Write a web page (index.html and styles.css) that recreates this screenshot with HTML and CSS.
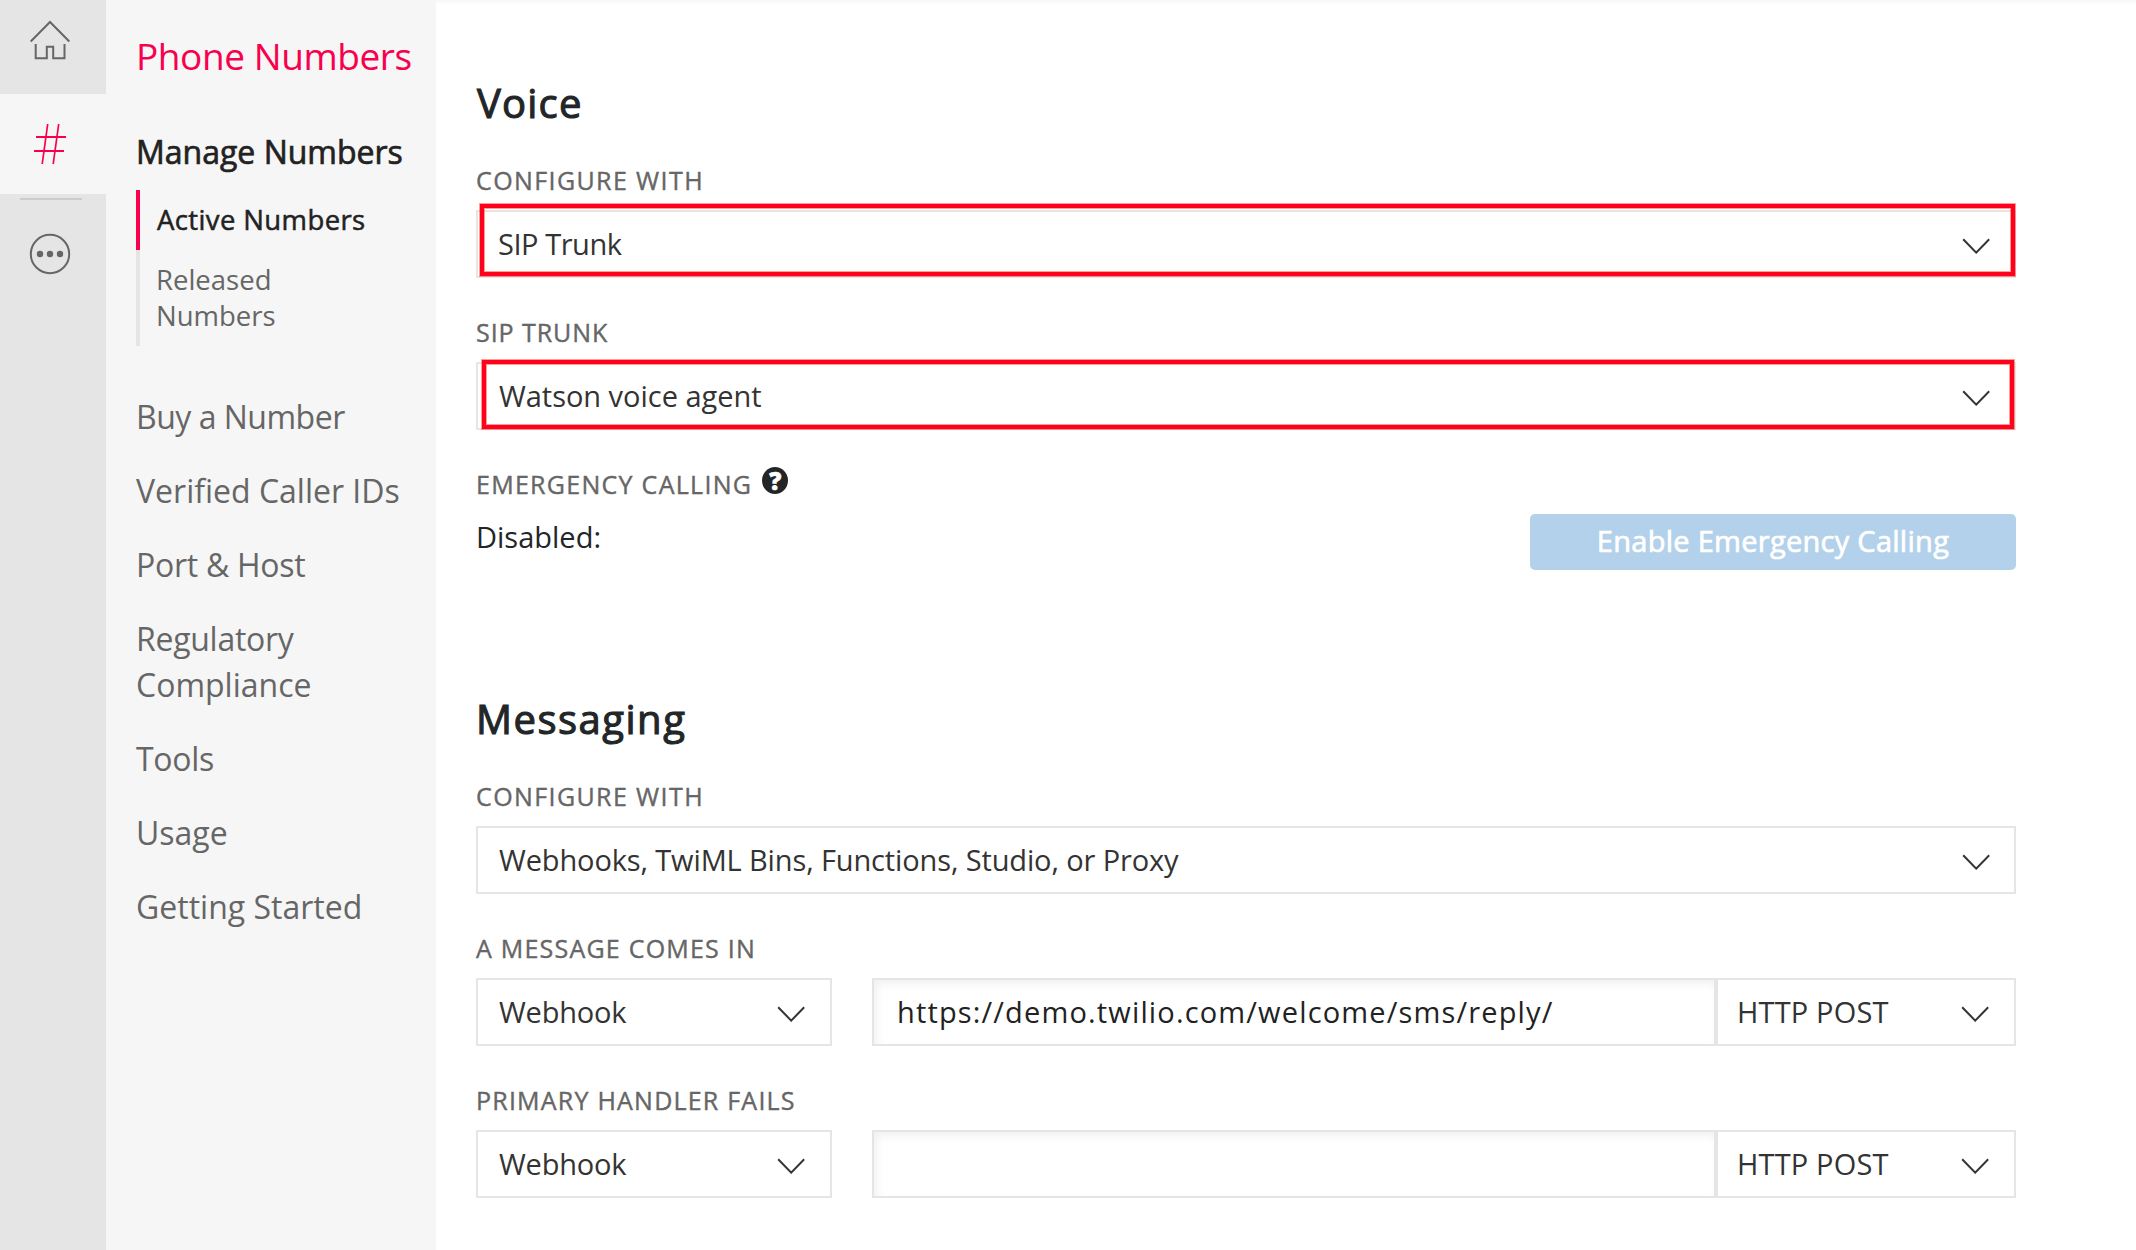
FILE: index.html
```html
<!DOCTYPE html>
<html lang="en">
<head>
<meta charset="utf-8">
<title>Phone Numbers</title>
<link rel="stylesheet" href="styles.css">
</head>
<body>
<svg class="defs" width="0" height="0" aria-hidden="true">
  <symbol id="chevron" viewBox="0 0 28 16"><path d="M1.2 1.3 14.2 14.6 27.2 1.3"/></symbol>
</svg>
<div class="app">
  <div class="rail">
    <a class="rail-item rail-home">
      <svg class="icon" width="44" height="44" viewBox="0 0 44 44"><path d="M2.7 23.5 22 4 41.300 23.500M7.700 26V40.200H18.800V28.800H25.200V40.200H36.500V26"/></svg>
    </a>
    <a class="rail-item rail-active">
      <svg class="icon icon-red" width="44" height="44" viewBox="0 0 44 44"><path d="M8 15H38M6 29H36"/><path class="thin" d="M19.700 2 14.200 42M30.700 2 25.200 42"/></svg>
    </a>
    <div class="rail-divider"></div>
    <a class="rail-item rail-more">
      <svg class="icon" width="44" height="44" viewBox="0 0 44 44"><circle cx="22" cy="22" r="19.200"/><g class="dots"><circle cx="12" cy="22" r="3.200"/><circle cx="22" cy="22" r="3.200"/><circle cx="32" cy="22" r="3.200"/></g></svg>
    </a>
  </div>

  <nav class="nav">
    <h1 class="nav-title">Phone Numbers</h1>
    <a class="nav-item current">Manage Numbers</a>
    <div class="subnav">
      <a class="subnav-item current">Active Numbers</a>
      <a class="subnav-item">Released<br>Numbers</a>
    </div>
    <div class="nav-list">
      <a class="nav-item tight">Buy a Number</a>
      <a class="nav-item">Verified Caller IDs</a>
      <a class="nav-item snug">Port &amp; Host</a>
      <a class="nav-item"><span class="snug">Regulatory</span><br>Compliance</a>
      <a class="nav-item snug">Tools</a>
      <a class="nav-item">Usage</a>
      <a class="nav-item">Getting Started</a>
    </div>
  </nav>

  <main class="main">
    <section class="section">
      <h2 class="heading heading-voice">Voice</h2>
      <div class="field">
        <div class="label label-wide">Configure with</div>
        <div class="select marked marked-config"><span class="sip">SIP Trunk</span><svg class="chevron"><use href="#chevron"/></svg></div>
      </div>
      <div class="field">
        <div class="label label-sip">SIP Trunk</div>
        <div class="select marked marked-trunk"><span>Watson voice agent</span><svg class="chevron"><use href="#chevron"/></svg></div>
      </div>
      <div class="field">
        <div class="label">Emergency Calling<span class="help">?</span></div>
        <div class="status-row">
          <span class="status">Disabled:</span>
          <button class="button">Enable Emergency Calling</button>
        </div>
      </div>
    </section>

    <section class="section section-messaging">
      <h2 class="heading">Messaging</h2>
      <div class="field">
        <div class="label label-wide">Configure with</div>
        <div class="select"><span class="products">Webhooks, TwiML Bins, Functions, Studio, or Proxy</span><svg class="chevron"><use href="#chevron"/></svg></div>
      </div>
      <div class="field">
        <div class="label label-message">A message comes in</div>
        <div class="row">
          <div class="select select-type"><span class="type">Webhook</span><svg class="chevron"><use href="#chevron"/></svg></div>
          <div class="input">https://demo.twilio.com/welcome/sms/reply/</div>
          <div class="select select-method"><span class="method">HTTP POST</span><svg class="chevron"><use href="#chevron"/></svg></div>
        </div>
      </div>
      <div class="field">
        <div class="label label-message">Primary handler fails</div>
        <div class="row">
          <div class="select select-type"><span class="type">Webhook</span><svg class="chevron"><use href="#chevron"/></svg></div>
          <div class="input"></div>
          <div class="select select-method"><span class="method">HTTP POST</span><svg class="chevron"><use href="#chevron"/></svg></div>
        </div>
      </div>
    </section>
  </main>
</div>
</body>
</html>
```
FILE: styles.css
```css
* { box-sizing: border-box; }

body {
  margin: 0;
  background: #fff;
  color: #222628;
  font-family: "Open Sans", "Noto Sans", sans-serif;
  font-size: 29px;
}

h1, h2 { margin: 0; font-weight: 400; }

.defs { display: block; }

.app {
  display: flex;
  height: 1250px;
  overflow: hidden;
  background: linear-gradient(rgba(0, 0, 0, .03), rgba(0, 0, 0, 0) 5px);
}

/* Icon rail */
.rail { width: 106px; background: #e5e5e5; }
.rail-item { display: flex; padding-left: 28px; }
.rail-home { height: 94px; padding-top: 18px; }
.rail-active { height: 100px; padding-top: 28px; background: #f6f6f6; }
.rail-divider { width: 62px; height: 2px; margin: 4px 0 0 20px; background: #ccc; }
.rail-more { padding-top: 32px; }

.icon { fill: none; stroke: #666; stroke-width: 2; }
.icon-red { stroke: #f8004d; }
.icon .thin { stroke-width: 1.7; }
.icon .dots { fill: #666; stroke: none; }

/* Section navigation */
.nav { width: 330px; padding: 31px 0 0 30px; background: #f6f6f6; color: #666; }
.nav-title {
  color: #f8004d;
  font-size: 37px;
  line-height: 50px;
  letter-spacing: -.43px;
  margin-bottom: 48px;
  white-space: nowrap;
}
.nav-item { display: block; font-size: 32px; line-height: 46px; white-space: nowrap; }
.nav-list { display: flex; flex-direction: column; gap: 28px; margin-top: 48px; }
.tight { letter-spacing: -.5px; }
.snug { letter-spacing: -.28px; }
.current { color: #222; -webkit-text-stroke: .7px #222; }

.subnav { margin-top: 15px; }
.subnav-item {
  display: block;
  padding: 12px 0 12px 16px;
  border-left: 4px solid #e5e5e5;
  font-size: 27.5px;
  line-height: 36px;
}
.subnav-item.current { padding-left: 17px; border-color: #f8004d; letter-spacing: .38px; -webkit-text-stroke-width: .5px; }

/* Configuration form */
.main { width: 1580px; padding: 77px 0 0 40px; }
.section-messaging { margin-top: 123px; }
.heading {
  font-size: 40px;
  line-height: 51px;
  letter-spacing: 1.5px;
  margin-bottom: 37px;
  -webkit-text-stroke: 1.100px #222628;
}
.heading-voice { padding-left: 1px; letter-spacing: 1.200px; }
.field + .field { margin-top: 39px; }

.label {
  display: flex;
  height: 30px;
  margin-bottom: 15px;
  color: #666;
  font-size: 25px;
  line-height: 30px;
  letter-spacing: 1.280px;
  text-transform: uppercase;
  -webkit-text-stroke: .4px #666;
}
.label-wide { letter-spacing: 1.400px; }
.label-sip { letter-spacing: .950px; }
.label-message { letter-spacing: 1.220px; }

.help {
  width: 26px;
  height: 27px;
  margin: -2px 0 0 10px;
  border-radius: 50%;
  background: #222628;
  color: #fff;
  font-size: 24px;
  font-weight: 800;
  line-height: 27px;
  letter-spacing: 0;
  text-align: center;
  -webkit-text-stroke: .6px #fff;
}

.select {
  position: relative;
  display: flex;
  align-items: center;
  justify-content: space-between;
  height: 68px;
  padding: 0 24px 2px 21px;
  border: 2px solid #e5e5e5;
  color: #333;
  letter-spacing: -.03px;
  white-space: nowrap;
}
.sip { margin-left: -1px; letter-spacing: -.45px; }
.type { letter-spacing: -.2px; }
.products { letter-spacing: -.13px; }
.method { letter-spacing: .160px; }
.chevron { width: 28px; height: 16px; margin-top: 6px; fill: none; stroke: #333; stroke-width: 2; }

/* Red callout outlines over the two voice selects */
.marked::after {
  content: "";
  position: absolute;
  border: 4px solid #ff001f;
  box-shadow: 0 0 0 1px rgba(255, 60, 40, .5), inset 0 0 0 1px rgba(255, 60, 40, .5);
}
.marked-config::after { left: 2px; top: -8px; right: -1px; bottom: 0; }
.marked-trunk::after { left: 4px; top: -4px; right: 0; bottom: -1px; }

.status-row { display: flex; justify-content: space-between; height: 56px; }
.status { padding-top: 3px; line-height: 40px; }
.button {
  width: 486px;
  height: 56px;
  padding: 0 0 3px;
  border: 0;
  border-radius: 5px;
  background: #b3d1ea;
  color: #fff;
  font: inherit;
  letter-spacing: .280px;
  -webkit-text-stroke: .7px #fff;
}

.row { display: flex; }
.select-type { width: 356px; padding-right: 25px; }
.select-method { width: 300px; padding: 0 25px 2px 19px; }
.input {
  display: flex;
  align-items: center;
  width: 844px;
  height: 68px;
  margin-left: 40px;
  padding: 0 23px 2px;
  border: 2px solid #e5e5e5;
  box-shadow: inset 3px 4px 8px rgba(0, 0, 0, .06);
  color: #222;
  letter-spacing: 1.150px;
}
```
